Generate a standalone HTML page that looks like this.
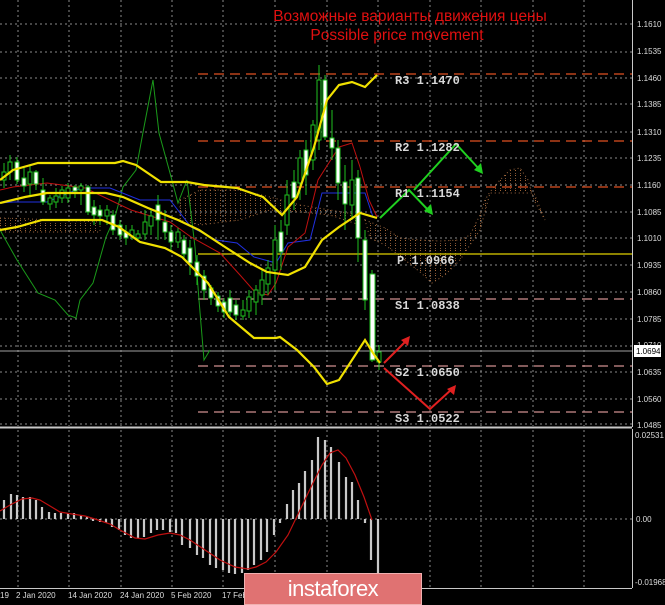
<!DOCTYPE html>
<html><head><meta charset="utf-8"><style>
html,body{margin:0;padding:0;background:#000;}
body{width:665px;height:605px;overflow:hidden;position:relative;font-family:"Liberation Sans",sans-serif;}
svg{position:absolute;left:0;top:0;}
.ax{font-family:"Liberation Sans",sans-serif;font-size:8px;fill:#ddd;}
.lv{font-family:"Liberation Mono",monospace;font-size:12px;font-weight:bold;fill:#d8d8d8;}
.logo{position:absolute;left:244px;top:573px;width:178px;height:32px;background:#e07272;border:1px solid #f0b0b0;box-sizing:border-box;color:#fff;font-size:22px;text-align:center;line-height:30px;letter-spacing:-0.5px;}
</style></head><body>
<svg width="665" height="605" viewBox="0 0 665 605">
<defs>
<pattern id="hatch" width="5" height="5" patternUnits="userSpaceOnUse">
<rect x="0" y="0" width="1" height="1" fill="#c07840"/><rect x="0" y="3" width="1" height="1" fill="#906040"/>
</pattern>
</defs>
<g stroke="#8a8a8a" stroke-width="1" stroke-dasharray="2,3">
<line x1="18" y1="0" x2="18" y2="588"/><line x1="69" y1="0" x2="69" y2="588"/><line x1="121" y1="0" x2="121" y2="588"/><line x1="172" y1="0" x2="172" y2="588"/><line x1="223" y1="0" x2="223" y2="588"/><line x1="275" y1="0" x2="275" y2="588"/><line x1="327" y1="0" x2="327" y2="588"/><line x1="378" y1="0" x2="378" y2="588"/><line x1="430" y1="0" x2="430" y2="588"/><line x1="481" y1="0" x2="481" y2="588"/><line x1="533" y1="0" x2="533" y2="588"/><line x1="584" y1="0" x2="584" y2="588"/>
<line x1="0" y1="24" x2="632" y2="24"/><line x1="0" y1="52" x2="632" y2="52"/><line x1="0" y1="78" x2="632" y2="78"/><line x1="0" y1="104" x2="632" y2="104"/><line x1="0" y1="132" x2="632" y2="132"/><line x1="0" y1="158" x2="632" y2="158"/><line x1="0" y1="185" x2="632" y2="185"/><line x1="0" y1="212" x2="632" y2="212"/><line x1="0" y1="238" x2="632" y2="238"/><line x1="0" y1="265" x2="632" y2="265"/><line x1="0" y1="292" x2="632" y2="292"/><line x1="0" y1="319" x2="632" y2="319"/><line x1="0" y1="346" x2="632" y2="346"/><line x1="0" y1="372" x2="632" y2="372"/><line x1="0" y1="399" x2="632" y2="399"/><line x1="0" y1="424" x2="632" y2="424"/>
<line x1="0" y1="519" x2="632" y2="519"/>
</g>
<rect x="0" y="426" width="665" height="3" fill="#000"/>
<line x1="0" y1="427.5" x2="632" y2="427.5" stroke="#c8c8c8" stroke-width="2"/>
<line x1="632.5" y1="0" x2="632.5" y2="427" stroke="#c8c8c8"/>
<line x1="632.5" y1="429" x2="632.5" y2="588" stroke="#c8c8c8"/>
<line x1="0" y1="588.5" x2="632" y2="588.5" stroke="#c8c8c8"/>
<g fill="url(#hatch)" stroke="#b87a4a" stroke-width="1" stroke-dasharray="1,3" opacity="0.85">
<path d="M0 218 L60 220 L100 222 L100 232 L60 232 L0 232Z"/>
<path d="M180 200 L200 190 L240 190 L270 197 L300 205 L330 210 L360 215 L360 225 L330 215 L300 212 L270 210 L240 220 L200 225 L180 220Z"/>
<path d="M365 220 L385 228 L400 238 L420 240 L440 241 L460 240 L470 235 L480 215 L485 200 L490 192 L500 180 L510 170 L520 168 L528 180 L534 200 L545 220 L534 193 L490 193 L480 230 L460 260 L445 275 L432 283 L420 272 L400 256 L385 245 L370 238Z"/>
</g>
<g stroke-dasharray="10,6" stroke-width="1.2">
<line x1="198" y1="74" x2="632" y2="74" stroke="#e05020"/>
<line x1="198" y1="141" x2="632" y2="141" stroke="#e05020"/>
<line x1="198" y1="187" x2="632" y2="187" stroke="#e05020"/>
<line x1="198" y1="299" x2="632" y2="299" stroke="#d09090"/>
<line x1="198" y1="366" x2="632" y2="366" stroke="#d09090"/>
<line x1="198" y1="412" x2="632" y2="412" stroke="#d09090"/>
</g>
<line x1="198" y1="254" x2="632" y2="254" stroke="#e0d000" stroke-width="1.2"/>
<line x1="0" y1="351" x2="632" y2="351" stroke="#a0a0a0" stroke-width="1"/>
<polyline fill="none" stroke="#1a9a1a" stroke-width="1" points="0,230 17,260 38,293 55,300 68,315 76,318 80,300 93,283 106,237 115,217 123,187 136,170 144,127 153,80 159,133 170,173 178,203 187,180 195,247 199,300 204,360 210,350"/>
<polyline fill="none" stroke="#2030e0" stroke-width="1" points="0,203 13,202 47,202 81,188 110,188 140,200 170,200 191,227 216,240 237,243 254,257 276,263 288,243 310,240 322,193 365,193 373,217"/>
<polyline fill="none" stroke="#c01010" stroke-width="1" points="0,190 13,187 47,183 85,188 110,200 131,210 170,222 191,237 220,253 240,275 255,292 268,295 276,283 288,247 305,233 318,180 339,147 352,143 360,167 369,200 377,217"/>
<g stroke="#1fbf1f" stroke-width="1">
<line x1="4" y1="163" x2="4" y2="188"/><rect x="2" y="172" width="4" height="8" fill="#000"/>
<line x1="10" y1="155" x2="10" y2="180"/><rect x="8" y="162" width="4" height="10" fill="#000"/>
<line x1="17" y1="157" x2="17" y2="184"/><rect x="15" y="162" width="4" height="18" fill="#fff"/>
<line x1="24" y1="168" x2="24" y2="192"/><rect x="22" y="178" width="4" height="8" fill="#fff"/>
<line x1="30" y1="165" x2="30" y2="196"/><rect x="28" y="172" width="4" height="12" fill="#000"/>
<line x1="36" y1="170" x2="36" y2="190"/><rect x="34" y="172" width="4" height="12" fill="#fff"/>
<line x1="43" y1="178" x2="43" y2="205"/><rect x="41" y="190" width="4" height="12" fill="#fff"/>
<line x1="50" y1="195" x2="50" y2="210"/><rect x="48" y="198" width="4" height="6" fill="#000"/>
<line x1="56" y1="188" x2="56" y2="208"/><rect x="54" y="196" width="4" height="6" fill="#000"/>
<line x1="62" y1="186" x2="62" y2="203"/><rect x="60" y="190" width="4" height="8" fill="#000"/>
<line x1="68" y1="183" x2="68" y2="203"/><rect x="66" y="188" width="4" height="10" fill="#000"/>
<line x1="75" y1="185" x2="75" y2="198"/><rect x="73" y="187" width="4" height="4" fill="#fff"/>
<line x1="81" y1="183" x2="81" y2="205"/><rect x="79" y="186" width="4" height="4" fill="#000"/>
<line x1="88" y1="185" x2="88" y2="215"/><rect x="86" y="187" width="4" height="25" fill="#fff"/>
<line x1="94" y1="200" x2="94" y2="225"/><rect x="92" y="207" width="4" height="8" fill="#fff"/>
<line x1="100" y1="205" x2="100" y2="225"/><rect x="98" y="210" width="4" height="6" fill="#fff"/>
<line x1="107" y1="205" x2="107" y2="225"/><rect x="105" y="210" width="4" height="6" fill="#000"/>
<line x1="113" y1="210" x2="113" y2="235"/><rect x="111" y="215" width="4" height="15" fill="#fff"/>
<line x1="120" y1="220" x2="120" y2="240"/><rect x="118" y="225" width="4" height="10" fill="#fff"/>
<line x1="126" y1="225" x2="126" y2="245"/><rect x="124" y="232" width="4" height="6" fill="#fff"/>
<line x1="132" y1="225" x2="132" y2="240"/><rect x="130" y="230" width="4" height="6" fill="#000"/>
<line x1="138" y1="230" x2="138" y2="242"/><rect x="136" y="234" width="4" height="4" fill="#000"/>
<line x1="145" y1="210" x2="145" y2="240"/><rect x="143" y="222" width="4" height="12" fill="#000"/>
<line x1="151" y1="210" x2="151" y2="235"/><rect x="149" y="216" width="4" height="10" fill="#000"/>
<line x1="158" y1="195" x2="158" y2="240"/><rect x="156" y="205" width="4" height="15" fill="#fff"/>
<line x1="165" y1="210" x2="165" y2="240"/><rect x="163" y="222" width="4" height="10" fill="#fff"/>
<line x1="171" y1="225" x2="171" y2="250"/><rect x="169" y="232" width="4" height="10" fill="#fff"/>
<line x1="178" y1="228" x2="178" y2="248"/><rect x="176" y="232" width="4" height="10" fill="#000"/>
<line x1="184" y1="235" x2="184" y2="260"/><rect x="182" y="240" width="4" height="14" fill="#fff"/>
<line x1="190" y1="240" x2="190" y2="275"/><rect x="188" y="248" width="4" height="15" fill="#fff"/>
<line x1="197" y1="255" x2="197" y2="285"/><rect x="195" y="262" width="4" height="14" fill="#fff"/>
<line x1="204" y1="270" x2="204" y2="300"/><rect x="202" y="276" width="4" height="14" fill="#fff"/>
<line x1="211" y1="285" x2="211" y2="305"/><rect x="209" y="288" width="4" height="10" fill="#fff"/>
<line x1="218" y1="292" x2="218" y2="312"/><rect x="216" y="296" width="4" height="10" fill="#fff"/>
<line x1="224" y1="298" x2="224" y2="318"/><rect x="222" y="302" width="4" height="10" fill="#fff"/>
<line x1="230" y1="290" x2="230" y2="318"/><rect x="228" y="298" width="4" height="14" fill="#fff"/>
<line x1="236" y1="300" x2="236" y2="320"/><rect x="234" y="305" width="4" height="10" fill="#fff"/>
<line x1="243" y1="300" x2="243" y2="320"/><rect x="241" y="310" width="4" height="6" fill="#000"/>
<line x1="249" y1="290" x2="249" y2="318"/><rect x="247" y="297" width="4" height="14" fill="#000"/>
<line x1="256" y1="285" x2="256" y2="315"/><rect x="254" y="290" width="4" height="12" fill="#000"/>
<line x1="262" y1="270" x2="262" y2="305"/><rect x="260" y="280" width="4" height="15" fill="#000"/>
<line x1="268" y1="260" x2="268" y2="295"/><rect x="266" y="268" width="4" height="16" fill="#000"/>
<line x1="275" y1="225" x2="275" y2="290"/><rect x="273" y="240" width="4" height="30" fill="#000"/>
<line x1="281" y1="220" x2="281" y2="270"/><rect x="279" y="232" width="4" height="20" fill="#fff"/>
<line x1="287" y1="180" x2="287" y2="235"/><rect x="285" y="195" width="4" height="30" fill="#000"/>
<line x1="294" y1="170" x2="294" y2="210"/><rect x="292" y="182" width="4" height="16" fill="#fff"/>
<line x1="300" y1="150" x2="300" y2="200"/><rect x="298" y="158" width="4" height="25" fill="#000"/>
<line x1="306" y1="140" x2="306" y2="195"/><rect x="304" y="150" width="4" height="25" fill="#fff"/>
<line x1="313" y1="120" x2="313" y2="170"/><rect x="311" y="125" width="4" height="35" fill="#000"/>
<line x1="319" y1="65" x2="319" y2="150"/><rect x="317" y="80" width="4" height="60" fill="#000"/>
<line x1="325" y1="75" x2="325" y2="140"/><rect x="323" y="80" width="4" height="57" fill="#fff"/>
<line x1="332" y1="110" x2="332" y2="160"/><rect x="330" y="138" width="4" height="10" fill="#fff"/>
<line x1="338" y1="140" x2="338" y2="200"/><rect x="336" y="148" width="4" height="35" fill="#fff"/>
<line x1="345" y1="165" x2="345" y2="230"/><rect x="343" y="182" width="4" height="22" fill="#fff"/>
<line x1="352" y1="160" x2="352" y2="220"/><rect x="350" y="180" width="4" height="25" fill="#000"/>
<line x1="358" y1="170" x2="358" y2="262"/><rect x="356" y="178" width="4" height="60" fill="#fff"/>
<line x1="365" y1="230" x2="365" y2="310"/><rect x="363" y="240" width="4" height="60" fill="#fff"/>
<line x1="372" y1="270" x2="372" y2="362"/><rect x="370" y="274" width="5" height="86" fill="#fff"/>
<line x1="379" y1="345" x2="379" y2="370"/><rect x="377" y="352" width="4" height="10" fill="#000"/>
</g>
<g fill="none" stroke="#f0e000" stroke-width="2.2">
<polyline points="0,180 13,170 38,163 115,163 123,161 136,165 161,182 187,182 204,185 237,188 263,197 282,215 297,197 314,147 327,100 339,85 352,82 365,87 377,75"/>
<polyline points="0,203 25,197 47,193 106,193 123,197 148,208 178,220 199,230 225,247 250,263 267,272 288,275 305,267 322,240 339,227 360,213 377,218"/>
<polyline points="0,230 17,227 42,220 102,220 119,227 140,242 165,248 182,257 195,270 208,283 229,317 254,338 276,338 280,337 297,350 314,367 327,384 339,380 365,340 373,353 380,363"/>
</g>
<g fill="none" stroke="#20d020" stroke-width="2">
<polyline points="380,218 409,190 430,212"/>
<polyline points="414,190 456,144 480,170"/>
</g>
<polygon points="433,215 424,211 431,204" fill="#20d020"/>
<polygon points="483,174 474,170 481,163" fill="#20d020"/>
<g fill="none" stroke="#e02020" stroke-width="2">
<polyline points="384,363 407,340"/>
<polyline points="384,368 430,409 452,389"/>
</g>
<polygon points="410,336 408,346 401,340" fill="#e02020"/>
<polygon points="456,385 454,395 447,389" fill="#e02020"/>
<text class="lv" x="395" y="84">R3 1.1470</text>
<text class="lv" x="395" y="151">R2 1.1282</text>
<text class="lv" x="395" y="197">R1 1.1154</text>
<text class="lv" x="397" y="264">P 1.0966</text>
<text class="lv" x="395" y="309">S1 1.0838</text>
<text class="lv" x="395" y="376">S2 1.0650</text>
<text class="lv" x="395" y="422">S3 1.0522</text>
<text x="410" y="21" fill="#e01010" font-size="15.5" text-anchor="middle" font-family="Liberation Sans, sans-serif">Возможные варианты движения цены</text>
<text x="397" y="40" fill="#e01010" font-size="15.5" text-anchor="middle" font-family="Liberation Sans, sans-serif">Possible price movement</text>
<text class="ax" x="637" y="27">1.1610</text>
<text class="ax" x="637" y="54">1.1535</text>
<text class="ax" x="637" y="81">1.1460</text>
<text class="ax" x="637" y="107">1.1385</text>
<text class="ax" x="637" y="135">1.1310</text>
<text class="ax" x="637" y="161">1.1235</text>
<text class="ax" x="637" y="188">1.1160</text>
<text class="ax" x="637" y="215">1.1085</text>
<text class="ax" x="637" y="241">1.1010</text>
<text class="ax" x="637" y="268">1.0935</text>
<text class="ax" x="637" y="295">1.0860</text>
<text class="ax" x="637" y="322">1.0785</text>
<text class="ax" x="637" y="348">1.0710</text>
<text class="ax" x="637" y="375">1.0635</text>
<text class="ax" x="637" y="402">1.0560</text>
<text class="ax" x="637" y="428">1.0485</text>
<rect x="634" y="345" width="27" height="12" fill="#fff"/>
<text x="636" y="354" font-size="8" fill="#000" font-family="Liberation Sans, sans-serif">1.0694</text>
<text class="ax" x="635" y="438">0.02531</text>
<text class="ax" x="636" y="522">0.00</text>
<text class="ax" x="635" y="585">-0.01968</text>
<text class="ax" x="0" y="598">19</text>
<text class="ax" x="16" y="598">2 Jan 2020</text>
<text class="ax" x="68" y="598">14 Jan 2020</text>
<text class="ax" x="120" y="598">24 Jan 2020</text>
<text class="ax" x="171" y="598">5 Feb 2020</text>
<text class="ax" x="222" y="598">17 Feb</text>
<g stroke="#c8c8c8" stroke-width="2.2">
<line x1="4" y1="519" x2="4" y2="500"/><line x1="11" y1="519" x2="11" y2="494"/><line x1="17" y1="519" x2="17" y2="495"/><line x1="23" y1="519" x2="23" y2="497"/><line x1="30" y1="519" x2="30" y2="497"/><line x1="36" y1="519" x2="36" y2="500"/><line x1="42" y1="519" x2="42" y2="507"/><line x1="49" y1="519" x2="49" y2="512"/><line x1="55" y1="519" x2="55" y2="513"/><line x1="61" y1="519" x2="61" y2="513"/><line x1="68" y1="519" x2="68" y2="513"/><line x1="74" y1="519" x2="74" y2="513"/><line x1="81" y1="519" x2="81" y2="515"/><line x1="87" y1="519" x2="87" y2="517"/>
<line x1="93" y1="519" x2="93" y2="521"/><line x1="100" y1="519" x2="100" y2="522"/><line x1="106" y1="519" x2="106" y2="523"/><line x1="112" y1="519" x2="112" y2="527"/><line x1="119" y1="519" x2="119" y2="530"/><line x1="125" y1="519" x2="125" y2="535"/><line x1="131" y1="519" x2="131" y2="538"/><line x1="138" y1="519" x2="138" y2="538"/><line x1="144" y1="519" x2="144" y2="537"/><line x1="151" y1="519" x2="151" y2="533"/><line x1="157" y1="519" x2="157" y2="530"/><line x1="163" y1="519" x2="163" y2="530"/><line x1="170" y1="519" x2="170" y2="532"/><line x1="176" y1="519" x2="176" y2="533"/><line x1="182" y1="519" x2="182" y2="545"/><line x1="190" y1="519" x2="190" y2="548"/><line x1="197" y1="519" x2="197" y2="555"/><line x1="203" y1="519" x2="203" y2="558"/><line x1="210" y1="519" x2="210" y2="565"/><line x1="216" y1="519" x2="216" y2="568"/><line x1="223" y1="519" x2="223" y2="570"/><line x1="229" y1="519" x2="229" y2="573"/><line x1="235" y1="519" x2="235" y2="574"/><line x1="242" y1="519" x2="242" y2="573"/><line x1="248" y1="519" x2="248" y2="570"/><line x1="254" y1="519" x2="254" y2="565"/><line x1="261" y1="519" x2="261" y2="560"/><line x1="267" y1="519" x2="267" y2="552"/><line x1="274" y1="519" x2="274" y2="535"/><line x1="280" y1="519" x2="280" y2="523"/>
<line x1="287" y1="519" x2="287" y2="504"/><line x1="293" y1="519" x2="293" y2="490"/><line x1="299" y1="519" x2="299" y2="483"/><line x1="305" y1="519" x2="305" y2="471"/><line x1="312" y1="519" x2="312" y2="460"/><line x1="318" y1="519" x2="318" y2="437"/><line x1="325" y1="519" x2="325" y2="440"/><line x1="331" y1="519" x2="331" y2="447"/><line x1="339" y1="519" x2="339" y2="462"/><line x1="346" y1="519" x2="346" y2="477"/><line x1="352" y1="519" x2="352" y2="482"/><line x1="358" y1="519" x2="358" y2="500"/><line x1="365" y1="519" x2="365" y2="523"/><line x1="371" y1="519" x2="371" y2="560"/><line x1="378" y1="519" x2="378" y2="588"/>
</g>
<polyline fill="none" stroke="#c01010" stroke-width="1.2" points="0,511 10,505 22,499 32,498 40,500 50,506 60,512 72,514 85,516 95,519 110,524 120,530 135,538 145,539 158,535 170,533 180,535 190,540 205,550 220,560 235,567 248,569 256,567 266,562 276,552 288,535 300,510 312,485 322,465 330,453 338,450 346,458 355,475 364,497 372,520"/>
</svg>
<div class="logo">instaforex</div>
</body></html>
